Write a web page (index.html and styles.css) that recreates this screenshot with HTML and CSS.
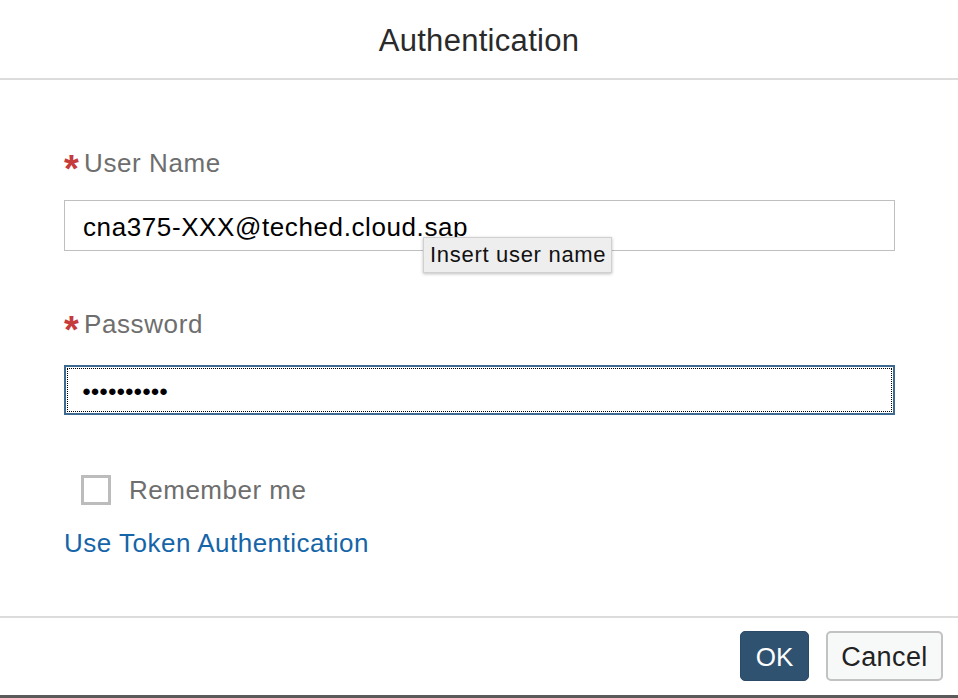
FILE: index.html
```html
<!DOCTYPE html>
<html lang="en">
<head>
<meta charset="utf-8">
<title>Authentication</title>
<link rel="stylesheet" href="styles.css">
</head>
<body>
<div class="dialog">
  <header class="dlg-header">
    <h1 class="dlg-title">Authentication</h1>
  </header>
  <main class="dlg-content">
    <div class="field field-user">
      <label class="label"><span class="req">*</span>User Name</label>
      <div class="input-wrap">
        <div class="input">cna375-XXX@teched.cloud.sap</div>
        <div class="tooltip">Insert user name</div>
      </div>
    </div>
    <div class="field field-pass">
      <label class="label"><span class="req">*</span>Password</label>
      <div class="input input-focus"><span class="focus-ring"><span class="dots">●●●●●●●●●●</span></span></div>
    </div>
    <div class="check-row">
      <span class="checkbox"></span>
      <span class="check-label">Remember me</span>
    </div>
    <a class="link">Use Token Authentication</a>
  </main>
  <footer class="dlg-footer">
    <button class="btn btn-primary">OK</button>
    <button class="btn btn-default">Cancel</button>
  </footer>
</div>
</body>
</html>
```
FILE: styles.css
```css
* { box-sizing: border-box; }
html, body { margin: 0; padding: 0; background: #fff; }
body {
  font-family: "Liberation Sans", Arial, Helvetica, sans-serif;
  width: 958px;
  height: 698px;
  overflow: hidden;
}
.dialog {
  width: 958px;
  height: 698px;
  display: flex;
  flex-direction: column;
  border-bottom: 3px solid #5a5a5a;
}
.dlg-header {
  height: 80px;
  border-bottom: 2px solid #dcdcdc;
  display: flex;
  align-items: center;
  justify-content: center;
}
.dlg-title {
  margin: 0;
  padding-top: 3px;
  font-size: 31px;
  font-weight: normal;
  color: #2a2a2a;
  letter-spacing: 0.3px;
}
.dlg-content {
  flex: 1;
  padding: 0 63px 0 64px;
  display: flex;
  flex-direction: column;
}
.field { display: flex; flex-direction: column; }
.field-user { margin-top: 68px; }
.field-pass { margin-top: 58px; }
.label {
  display: flex;
  align-items: flex-start;
  height: 30px;
  line-height: 30px;
  font-size: 26px;
  color: #6e6e6e;
  letter-spacing: 0.6px;
}
.req {
  color: #c63b3b;
  font-weight: bold;
  font-size: 38px;
  line-height: 30px;
  width: 20px;
  margin-top: 6px;
  letter-spacing: 0;
}
.input-wrap { position: relative; margin-top: 22px; }
.field-pass .input { margin-top: 26px; }
.input {
  height: 51px;
  border: 1.5px solid #bfbfbf;
  background: #fff;
  padding: 4px 0 0 18px;
  display: flex;
  align-items: center;
  font-size: 26px;
  color: #000;
  letter-spacing: 0.6px;
}
.input-focus {
  border: 2px solid #3e6a91;
  padding: 1px;
  height: 50px;
}
.focus-ring {
  flex: 1;
  height: 100%;
  border: 1.5px dotted #000;
  display: flex;
  align-items: center;
  padding-left: 14px;
}
.dots {
  font-size: 15px;
  letter-spacing: -0.5px;
  color: #000;
}
.tooltip {
  position: absolute;
  left: 359px;
  top: 37px;
  height: 36px;
  padding: 0 5px 0 6px;
  background: #eeeeee;
  border: 1px solid #d0d0d0;
  box-shadow: 0 1px 3px rgba(0,0,0,0.25);
  font-size: 22px;
  line-height: 34px;
  color: #111;
  letter-spacing: 0.7px;
}
.check-row {
  margin-top: 60px;
  margin-left: 17px;
  display: flex;
  align-items: center;
  height: 30px;
}
.checkbox {
  width: 30px;
  height: 30px;
  border: 3px solid #bcbcbc;
  background: #fff;
}
.check-label {
  margin-left: 18px;
  font-size: 26px;
  color: #6e6e6e;
  letter-spacing: 0.5px;
}
.link {
  margin-top: 23px;
  font-size: 26px;
  line-height: 30px;
  color: #1565a8;
  letter-spacing: 0.5px;
  align-self: flex-start;
}
.dlg-footer {
  height: 79px;
  border-top: 2px solid #dcdcdc;
  display: flex;
  justify-content: flex-end;
  align-items: flex-start;
  padding: 13px 15px 0 0;
  gap: 17px;
}
.btn {
  height: 50px;
  border-radius: 5px;
  font-family: "Liberation Sans", Arial, sans-serif;
  font-size: 26px;
  padding: 2px 0 0 0;
  cursor: pointer;
}
.btn-primary {
  width: 69px;
  background: #2f5271;
  border: 1px solid #2a4a66;
  color: #fff;
}
.btn-default {
  width: 117px;
  background: #f7f8f8;
  border: 2px solid #c2c2c2;
  color: #222;
  font-size: 27px;
  letter-spacing: 0.4px;
}
```
